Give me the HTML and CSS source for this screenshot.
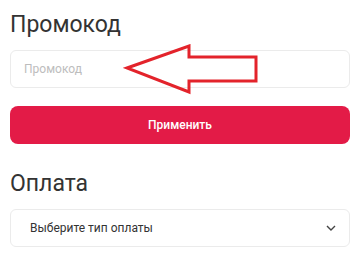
FILE: index.html
```html
<!DOCTYPE html>
<html lang="ru">
<head>
<meta charset="utf-8">
<link rel="stylesheet" href="styles.css">
</head>
<body>
<div class="page">
  <section class="block promo">
    <h2 class="title">Промокод</h2>
    <div class="field-wrap">
      <input class="field" type="text" placeholder="Промокод">
      <svg class="arrow" width="140" height="54" viewBox="0 0 140 54" aria-hidden="true">
        <polygon points="4,24 66,2 66,13 133,13 133,37 66,37 66,48" fill="none" stroke="#e3232b" stroke-width="3" stroke-linejoin="miter"/>
      </svg>
    </div>
    <button class="btn" type="button">Применить</button>
  </section>
  <section class="block pay">
    <h2 class="title">Оплата</h2>
    <div class="select">
      <span class="select-text">Выберите тип оплаты</span>
      <svg class="chev" width="10" height="6" viewBox="0 0 10 6" aria-hidden="true">
        <polyline points="1,1 5,5 9,1" fill="none" stroke="#444" stroke-width="1.4"/>
      </svg>
    </div>
  </section>
</div>
</body>
</html>
```

FILE: styles.css
```css
* { box-sizing: border-box; }
html, body { margin: 0; padding: 0; background: #fff; }
body { font-family: Roboto, "Noto Sans", sans-serif; color: #333; }
.page { padding: 11px 10px 0; width: 360px; }
.block { display: flex; flex-direction: column; }
.pay { margin-top: 26px; }
.title {
  margin: 0 0 11px;
  font-size: 23px;
  line-height: 28px;
  font-weight: 400;
  color: #333;
}
.field-wrap { position: relative; }
.field {
  display: block;
  width: 100%;
  height: 38px;
  border: 1px solid #ebebeb;
  border-radius: 6px;
  padding: 0 13px;
  font-family: Roboto, sans-serif;
  font-size: 12px;
  color: #333;
  background: #fff;
  outline: none;
}
.field::placeholder { color: #bdbdbd; }
.arrow { position: absolute; left: 113px; top: -6px; }
.btn {
  margin-top: 18px;
  height: 38px;
  width: 100%;
  border: 0;
  border-radius: 8px;
  background: #e31b47;
  color: #fff;
  font-family: Roboto, sans-serif;
  font-size: 12px;
  font-weight: 500;
}
.select {
  height: 38px;
  border: 1px solid #ebebeb;
  border-radius: 6px;
  display: flex;
  align-items: center;
  justify-content: space-between;
  padding: 0 13px 0 19px;
}
.select-text { font-size: 12px; color: #333; }
.chev { display: block; }
```
